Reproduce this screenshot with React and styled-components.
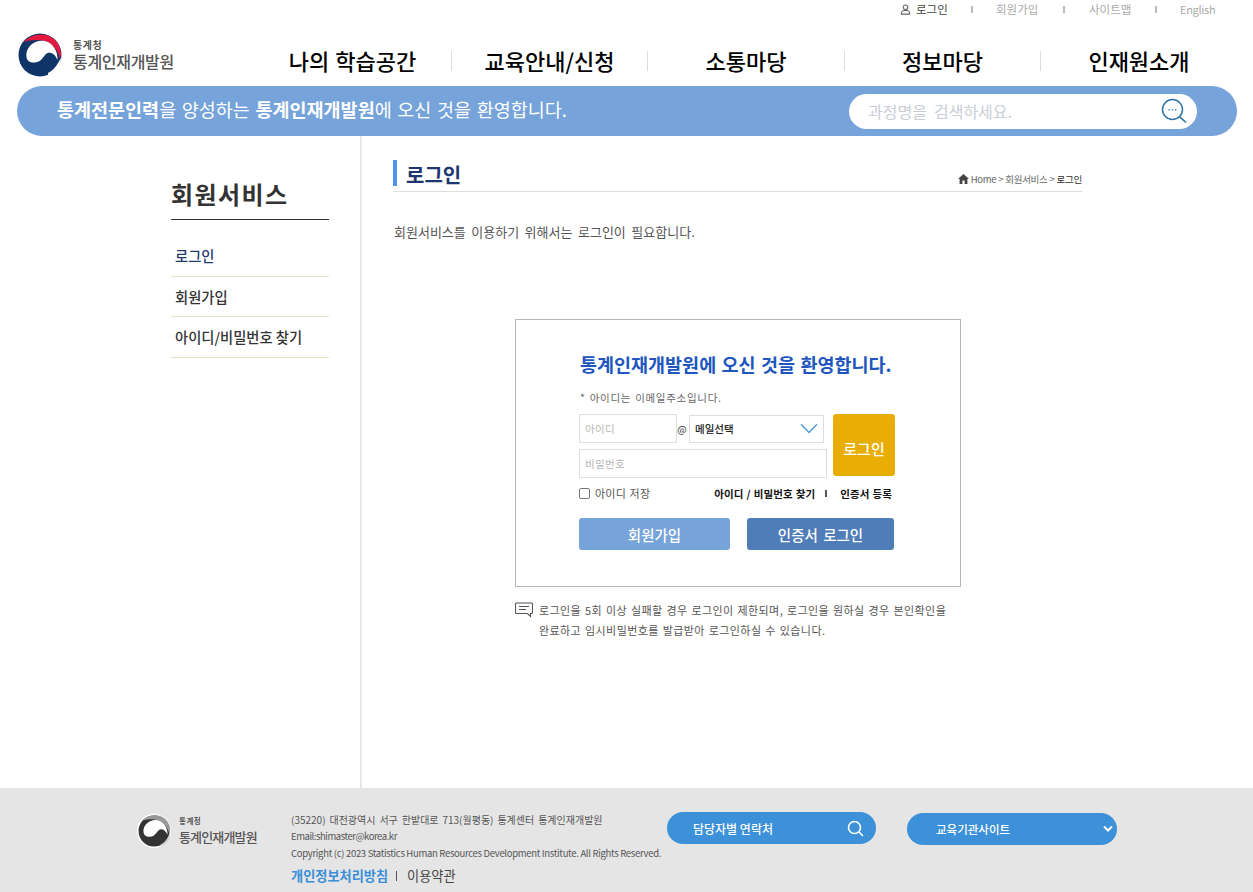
import React from "react";
import styled, { createGlobalStyle } from "styled-components";

const Global = createGlobalStyle`
  html, body { margin: 0; padding: 0; background: #fff; }
  body { font-family: "Noto Sans CJK KR", "Noto Sans", sans-serif; color: #333; }
  * { box-sizing: border-box; }
`;

const Page = styled.div`
  width: 1253px; height: 892px; display: flex; flex-direction: column; overflow: hidden;
`;
const Util = styled.div`
  height: 18px; margin-bottom: 2px; display: flex; align-items: center; justify-content: flex-end; padding-right: 40px;
`;
const UtilItem = styled.span`
  display: inline-flex; align-items: center; gap: 5px; font-size: ${p => p.$fs || 11.5}px; line-height: 18px; white-space: nowrap;
  letter-spacing: ${p => p.$ls || 0}px;
  color: ${p => (p.$on ? "#444" : "#aaa")};
  width: ${p => p.$w}px;
`;
const UtilSep = styled.i`
  display: block; width: 2px; height: 7px; background: #bbb; margin-right: ${p => p.$m}px;
`;
const Head = styled.div`
  height: 66px; display: flex; align-items: flex-start;
`;
const LogoBox = styled.div`
  width: 254px; padding: 13px 0 0 18px; display: flex; gap: 11px; align-items: center; flex: none;
`;
const LogoText = styled.div`
  display: flex; flex-direction: column; color: ${p => p.$c || "#555"};
`;
const LogoSmall = styled.span`
  font-size: ${p => p.$s || 10}px; line-height: 12px; font-weight: 700; letter-spacing: 0.5px;
`;
const LogoMain = styled.span`
  font-size: ${p => p.$s || 16}px; line-height: 20px; font-weight: 500; letter-spacing: ${p => p.$ls || -0.3}px;
`;
const Nav = styled.nav`
  display: flex; padding-top: 31px;
`;
const NavItem = styled.a`
  width: ${p => p.$w}px; height: 20px; display: flex; align-items: center; justify-content: center;
  font-size: 22px; font-weight: 500; color: #000; white-space: nowrap; word-spacing: 1px;
  border-left: ${p => (p.$first ? "none" : "1px solid #ddd")};
  line-height: 20px; padding-bottom: 2px;
`;
const Banner = styled.div`
  margin: 0 16px 0 17px; height: 50px; border-radius: 25px; background: #76a3d9; flex: none;
  display: flex; align-items: center; justify-content: space-between; padding: 0 40px 0 40px;
`;
const BannerText = styled.p`
  margin: 0 0 3px; color: #fff; font-size: 18.5px; line-height: 47px; word-spacing: 1.5px;
  b { font-weight: 700; }
`;
const Search = styled.div`
  width: 348px; height: 35px; border-radius: 18px; background: #fff; display: flex; align-items: center;
  justify-content: space-between; padding: 0 10px 0 19px; color: #c9ced6; font-size: 16px; word-spacing: 3.5px;
  margin-left: auto;
`;
const Main = styled.div`
  flex: 1; display: flex; min-height: 0;
`;
const Side = styled.aside`
  width: 362px; flex: none; border-right: 2px solid #e8e8e8; padding: 43px 31px 0 171px;
`;
const SideTitle = styled.h2`
  margin: 0; height: 41px; font-size: 24px; line-height: 30px; font-weight: 700; color: #333; letter-spacing: 1.4px;
  border-bottom: 1px solid #333;
`;
const SideList = styled.ul`
  list-style: none; margin: 16px 0 0; padding: 0;
`;
const SideItem = styled.li`
  height: 40.6px; line-height: 40px; padding-left: 4px; font-size: 14.3px; font-weight: 500;
  color: ${p => (p.$on ? "#1f3b70" : "#333")};
  border-bottom: 1px solid #e3e0c6;
`;
const Content = styled.section`
  width: 720px; padding: 24px 0 0 31px; display: flex; flex-direction: column;
`;
const TitleRow = styled.div`
  height: 32px; display: flex; justify-content: space-between; align-items: flex-start; border-bottom: 1px solid #ddd;
`;
const PageTitle = styled.h1`
  margin: 0; height: 26px; border-left: 4px solid #4f94ef; padding-left: 9px; font-size: 20px; line-height: 30px;
  font-weight: 700; color: #1d3570;
`;
const Crumb = styled.div`
  display: flex; align-items: center; gap: 2px; font-size: 9.5px; color: #666; margin-top: 12px; line-height: 14px; letter-spacing: -0.25px;
  white-space: nowrap;
  b { font-weight: 400; color: #333; }
`;
const Intro = styled.p`
  margin: 30px 0 0 1px; font-size: 13px; line-height: 20px; color: #555; word-spacing: 2.6px;
`;
const Card = styled.div`
  margin: 77px 0 0 122px; width: 446px; height: 268px; border: 1px solid #b5b5b5; padding: 29px 63px 0;
`;
const Welcome = styled.h3`
  margin: 0 0 0 1px; font-size: 18.5px; line-height: 30px; color: #2056bd; font-weight: 700; white-space: nowrap; word-spacing: 1.2px;
`;
const Hint = styled.p`
  margin: 12px 0 0 1px; font-size: 10.5px; line-height: 14px; color: #666; letter-spacing: 0.7px; word-spacing: 1px;
`;
const FormRow = styled.div`
  margin-top: 9px; display: flex; gap: 6px;
`;
const Fields = styled.div`
  width: 248px; display: flex; flex-direction: column; gap: 6px;
`;
const IdRow = styled.div`
  display: flex; align-items: center; height: 29px;
`;
const Input = styled.div`
  width: ${p => p.$w}; height: ${p => p.$h}px; border: 1px solid #ddd; padding-left: 5px; display: flex; align-items: center;
  font-size: 10.5px; color: #b5b5b5; flex: none; letter-spacing: 0.3px;
`;
const At = styled.span`
  width: 12px; text-align: center; font-size: 10px; color: #333; flex: none; padding-right: 2px;
`;
const Select = styled.div`
  width: 135px; height: 28px; border: 1px solid #ddd; display: flex; align-items: center; justify-content: space-between;
  padding: 0 5px 0 5px; font-size: 10.5px; color: #222; font-weight: 500; flex: none;
`;
const LoginBtn = styled.button`
  width: 62px; height: 62px; border: 0; border-radius: 3px; background: #e8ae06; color: #fff; font: inherit;
  font-size: 15px; font-weight: 500; padding: 6px 0 0; flex: none;
`;
const Links = styled.div`
  margin-top: 5px; height: 20px; display: flex; align-items: center; width: 313px;
`;
const Check = styled.label`
  display: flex; align-items: center; gap: 5px; color: #555; font-size: 11px; letter-spacing: 0.2px; word-spacing: 1px;
  &::before { content: ""; width: 9px; height: 9px; border: 1px solid #777; border-radius: 2px; }
  margin-right: auto;
`;
const LinkText = styled.a`
  color: #111; font-weight: 700; font-size: 10.5px; white-space: nowrap; word-spacing: 0.5px; letter-spacing: 0.1px;
`;
const LinkSep = styled.i`
  width: 2px; height: 7px; background: #555; margin: 0 13px 0 10px;
`;
const Buttons = styled.div`
  margin-top: 15px; display: flex; justify-content: space-between; width: 315px;
`;
const Btn = styled.button`
  width: ${p => p.$w}px; height: 32px; border: 0; border-radius: 3px; background: ${p => p.$bg}; color: #fff;
  font: inherit; font-size: 14.5px; font-weight: 500; padding: 0; word-spacing: 2px;
`;
const Notice = styled.div`
  margin: 13px 0 0 122px; display: flex; gap: 6px; width: 446px;
`;
const NoticeIcon = styled.svg`
  flex: none; margin-top: 2px;
`;
const NoticeText = styled.p`
  margin: 0; font-size: 11px; line-height: 20px; color: #555; letter-spacing: 0.42px; word-spacing: 1px; white-space: nowrap;
`;
const Footer = styled.footer`
  height: 104px; background: #e5e5e5; flex: none; display: flex; padding: 24px 0 0 137px;
`;
const FootLogo = styled.div`
  width: 154px; flex: none; display: flex; gap: 8px; align-items: center; height: 36px; margin-top: 1px;
`;
const FootInfo = styled.div`
  width: 376px; flex: none; margin-top: -1px; font-size: 10px; color: #555; line-height: 17px;
`;
const FootLine = styled.div`
  white-space: nowrap; font-size: ${p => p.$fs || 10}px; letter-spacing: ${p => p.$ls || 0}px; word-spacing: ${p => p.$ws || 0}px;
`;
const FootLinks = styled.div`
  margin-top: 5px; font-size: 13.2px; line-height: 18px; color: #444; display: flex; align-items: center; white-space: nowrap;
  b { color: #3a8fd8; font-weight: 700; }
  i { width: 1px; height: 10px; background: #555; margin: 0 10px 0 8px; }
`;
const Pill = styled.div`
  width: ${p => p.$w}px; height: 32px; border-radius: 16px; background: #3d91d8; color: #fff; font-size: ${p => p.$fs}px;
  font-weight: 500; display: flex; align-items: center; justify-content: space-between; padding: ${p => p.$pad};
  margin-left: ${p => p.$ml || 0}px; margin-top: ${p => p.$mt || 0}px; flex: none;
`;

const Taegeuk = ({ size, mono }) => (
  <svg width={size} height={size} viewBox="0 0 44 44">
    {mono && <circle cx="22" cy="22" r="22" fill="#fff" />}
    <circle cx="22" cy="22" r={mono ? 20 : 21.5} fill={mono ? "#333" : "#0f3568"} />
    <path d="M30 40 C34 38 38 34 40 30 L43 25 C43 32 38 40 30 42Z" fill={mono ? "#ccc" : "#fff"} />
    <path d="M6 9 C12 2 24 -1 33 4 C41 9 45 18 42 26 C40 18 35 10 27 8 C19 6 12 7 6 9Z" fill={mono ? "#999" : "#e4173f"} />
    <path d="M8.5 24 C7 14 17 6 27 8 C35 10 40 18 39.5 27 C37 20 31 18 28 21 C25 24 23 29 17 29.5 C12.5 30 9 28 8.5 24Z" fill="#fff" />
  </svg>
);

const UserIcon = () => (
  <svg width="11" height="11" viewBox="0 0 12 12" fill="none" stroke="#666" strokeWidth="1.2">
    <circle cx="6" cy="3.6" r="2.5" />
    <path d="M1.5 11 V9.5 C1.5 8 3 7.2 4 7 H8 C9 7.2 10.5 8 10.5 9.5 V11 Z" />
  </svg>
);
const SearchDots = () => (
  <svg width="26" height="26" viewBox="0 0 26 26" fill="none">
    <circle cx="11.5" cy="11.5" r="10" stroke="#2e74a8" strokeWidth="1.5" />
    <path d="M18.8 18.8 L25 24.5" stroke="#2e74a8" strokeWidth="1.6" />
    <path d="M7.5 11.8h1.4M10.8 11.8h1.4M14 11.8h1.4" stroke="#2e74a8" strokeWidth="1.3" />
  </svg>
);
const Chevron = () => (
  <svg width="18" height="11" viewBox="0 0 18 11" fill="none"><path d="M1 1.2 L9 9.5 L17 1.2" stroke="#4d9ce0" strokeWidth="1.4" /></svg>
);
const HomeIcon = () => (
  <svg width="11" height="10" viewBox="0 0 11 10"><path d="M5.5 0 L11 5 H9.4 V10 H6.6 V6.5 H4.4 V10 H1.6 V5 H0 Z" fill="#444" /></svg>
);

export default function App() {
  return (
    <Page>
      <Global />
      <Util>
        <UtilItem $on $w={71}><UserIcon />로그인</UtilItem><UtilSep $m={23} />
        <UtilItem $w={67}>회원가입</UtilItem><UtilSep $m={24} />
        <UtilItem $w={66}>사이트맵</UtilItem><UtilSep $m={23} />
        <UtilItem $w={33} $fs={11} $ls={-0.3}>English</UtilItem>
      </Util>
      <Head>
        <LogoBox>
          <Taegeuk size={44} />
          <LogoText>
            <LogoSmall>통계청</LogoSmall>
            <LogoMain>통계인재개발원</LogoMain>
          </LogoText>
        </LogoBox>
        <Nav>
          <NavItem $first $w={197}>나의 학습공간</NavItem>
          <NavItem $w={196}>교육안내/신청</NavItem>
          <NavItem $w={197}>소통마당</NavItem>
          <NavItem $w={196}>정보마당</NavItem>
          <NavItem $w={197}>인재원소개</NavItem>
        </Nav>
      </Head>
      <Banner>
        <BannerText><b>통계전문인력</b>을 양성하는 <b>통계인재개발원</b>에 오신 것을 환영합니다.</BannerText>
        <Search>과정명을 검색하세요.<SearchDots /></Search>
      </Banner>
      <Main>
        <Side>
          <SideTitle>회원서비스</SideTitle>
          <SideList>
            <SideItem $on>로그인</SideItem>
            <SideItem>회원가입</SideItem>
            <SideItem>아이디/비밀번호 찾기</SideItem>
          </SideList>
        </Side>
        <Content>
          <TitleRow>
            <PageTitle>로그인</PageTitle>
            <Crumb><HomeIcon />Home &gt; 회원서비스 &gt; <b>로그인</b></Crumb>
          </TitleRow>
          <Intro>회원서비스를 이용하기 위해서는 로그인이 필요합니다.</Intro>
          <Card>
            <Welcome>통계인재개발원에 오신 것을 환영합니다.</Welcome>
            <Hint>* 아이디는 이메일주소입니다.</Hint>
            <FormRow>
              <Fields>
                <IdRow>
                  <Input $w="98px" $h={29}>아이디</Input>
                  <At>@</At>
                  <Select>메일선택<Chevron /></Select>
                </IdRow>
                <Input $w="248px" $h={29}>비밀번호</Input>
              </Fields>
              <LoginBtn>로그인</LoginBtn>
            </FormRow>
            <Links>
              <Check>아이디 저장</Check>
              <LinkText>아이디 / 비밀번호 찾기</LinkText>
              <LinkSep />
              <LinkText>인증서 등록</LinkText>
            </Links>
            <Buttons>
              <Btn $w={151} $bg="#76a3d9">회원가입</Btn>
              <Btn $w={147} $bg="#4f7db7">인증서 로그인</Btn>
            </Buttons>
          </Card>
          <Notice>
            <NoticeIcon width="18" height="16" viewBox="0 0 18 16" fill="none" stroke="#555" strokeWidth="1.1">
              <path d="M1.5 1 H16.5 Q17.5 1 17.5 2 V10.5 Q17.5 11.5 16.5 11.5 H15.5 V14.5 L12.5 11.5 H1.5 Q0.5 11.5 .5 10.5 V2 Q.5 1 1.5 1 Z" />
              <path d="M4 4.5 H14 M4 7.5 H11" />
            </NoticeIcon>
            <NoticeText>
              로그인을 5회 이상 실패할 경우 로그인이 제한되며, 로그인을 원하실 경우 본인확인을<br />
              완료하고 임시비밀번호를 발급받아 로그인하실 수 있습니다.
            </NoticeText>
          </Notice>
        </Content>
      </Main>
      <Footer>
        <FootLogo>
          <Taegeuk size={34} mono />
          <LogoText $c="#555">
            <LogoSmall $s={7.5}>통계청</LogoSmall>
            <LogoMain $s={13} $ls={-0.85}>통계인재개발원</LogoMain>
          </LogoText>
        </FootLogo>
        <FootInfo>
          <FootLine $ws={1.7}>(35220) 대전광역시 서구 한밭대로 713(월평동) 통계센터 통계인재개발원</FootLine>
          <FootLine $fs={9.5} $ls={-0.45}>Email:shimaster@korea.kr</FootLine>
          <FootLine $fs={9.5} $ls={-0.3}>Copyright (c) 2023 Statistics Human Resources Development Institute. All Rights Reserved.</FootLine>
          <FootLinks><b>개인정보처리방침</b><i />이용약관</FootLinks>
        </FootInfo>
        <Pill $w={209} $fs={12} $pad="0 12px 0 26px">담당자별 연락처
          <svg width="17" height="17" viewBox="0 0 17 17" fill="none" stroke="#fff" strokeWidth="1.6"><circle cx="7.5" cy="7.5" r="6" /><path d="M11.8 11.8 L16 16" /></svg>
        </Pill>
        <Pill $w={210} $fs={11.5} $ml={31} $mt={1} $pad="0 4px 0 29px">교육기관사이트
          <svg width="10" height="8" viewBox="0 0 10 8" fill="none" stroke="#fff" strokeWidth="2"><path d="M1 1.5 L5 5.5 L9 1.5" /></svg>
        </Pill>
      </Footer>
    </Page>
  );
}
